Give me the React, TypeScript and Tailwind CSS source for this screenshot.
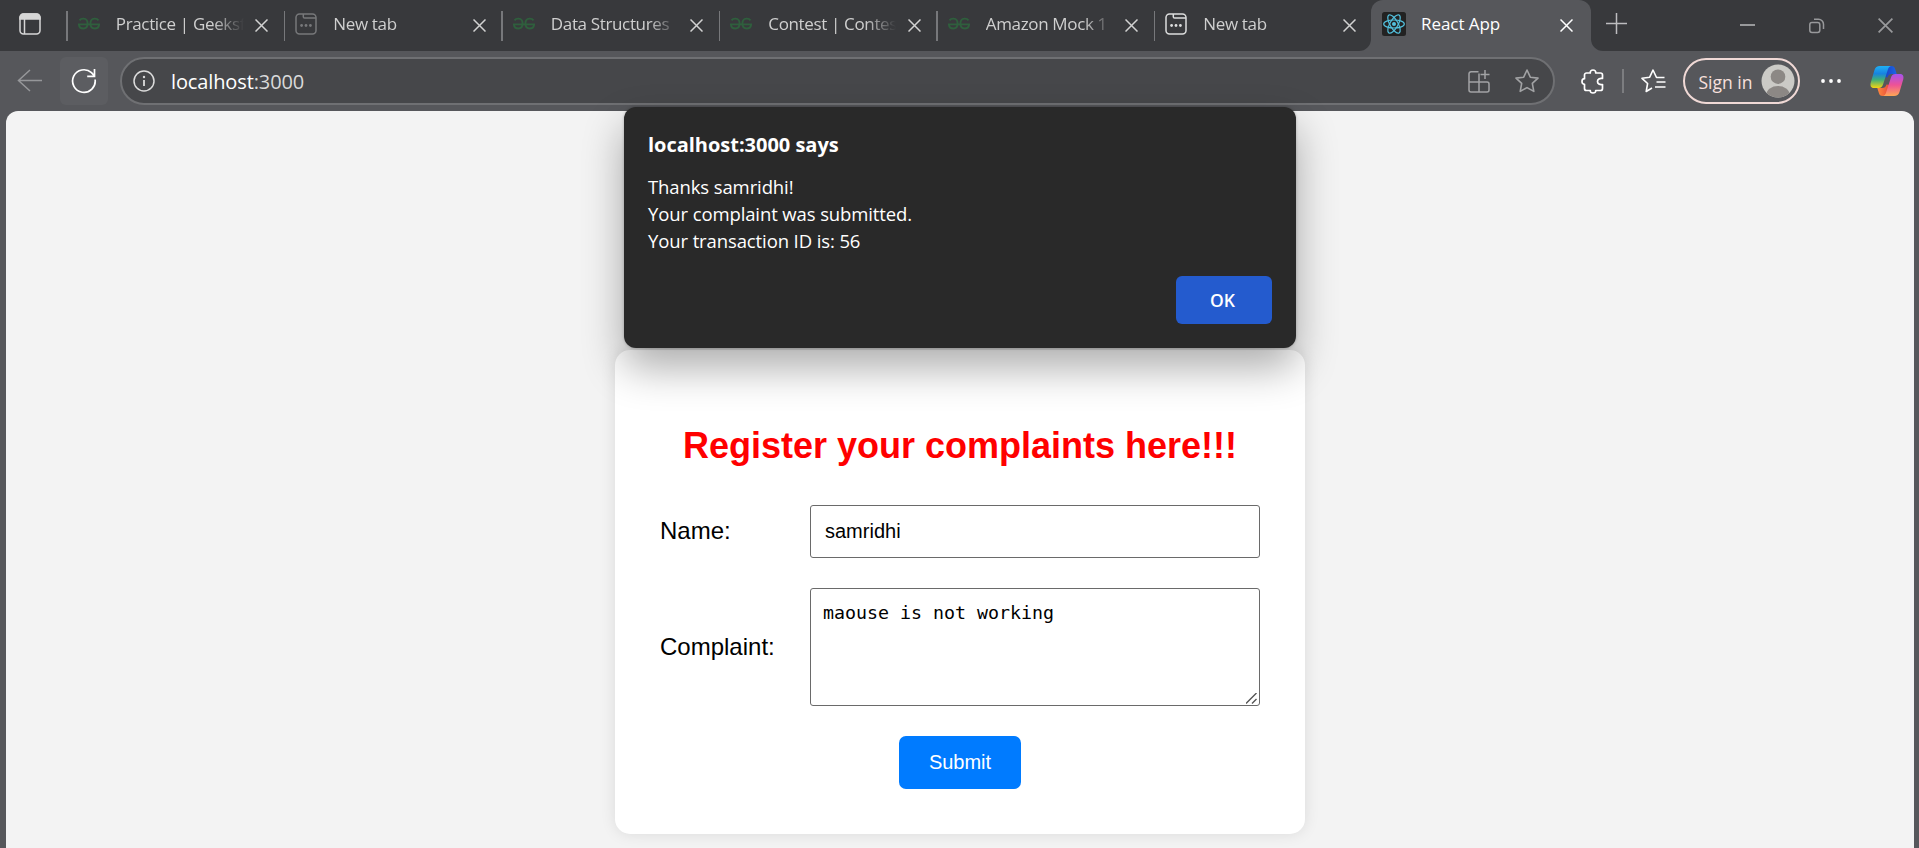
import React from "react";

const ui = "font-['Open_Sans','Noto_Sans',sans-serif]";

function GfgIcon() {
  return (
    <svg width="22" height="14" viewBox="0 0 22 14" fill="none" stroke="#2f5f3d" strokeWidth="1.9">
      <path d="M1.5 3.4C2.6 1.8 4.2 1.5 5.6 1.6c2.4.2 4 2.100 4 4.900 0 3-1.700 5-4.300 5-2.500 0-4.200-1.500-4.400-4.100H21.100c-.2 2.600-1.900 4.100-4.400 4.100-2.600 0-4.300-2-4.300-5 0-2.800 1.600-4.700 4-4.900 1.400-.1 3 .2 4.100 1.800" />
    </svg>
  );
}

function NewTabIcon({ color }: { color: string }) {
  return (
    <svg width="22" height="22" viewBox="0 0 22 22" fill="none" stroke={color} strokeWidth="1.5">
      <rect x="1" y="1" width="20" height="20" rx="3.500" />
      <path d="M8.300 1v2.700c0 .8.500 1.300 1.300 1.300H21" />
      <g fill={color} stroke="none">
        <circle cx="6.600" cy="12.500" r="1.400" />
        <circle cx="11" cy="12.500" r="1.400" />
        <circle cx="15.400" cy="12.500" r="1.400" />
      </g>
    </svg>
  );
}

function ReactIcon() {
  return (
    <svg width="24" height="24" viewBox="0 0 24 24" fill="none" stroke="#53c1de" strokeWidth="1.200">
      <rect width="24" height="24" rx="2.500" fill="#222" stroke="none" />
      <ellipse cx="12" cy="12" rx="10.300" ry="4" />
      <ellipse cx="12" cy="12" rx="10.300" ry="4" transform="rotate(60 12 12)" />
      <ellipse cx="12" cy="12" rx="10.300" ry="4" transform="rotate(120 12 12)" />
      <circle cx="12" cy="12" r="2" fill="#53c1de" stroke="none" />
    </svg>
  );
}

function Cross({ color, size = 13 }: { color: string; size?: number }) {
  return (
    <svg width={size} height={size} viewBox="0 0 13 13" stroke={color} strokeWidth="1.500" fill="none">
      <path d="M.5.5l12 12M12.500.5l-12 12" />
    </svg>
  );
}

type TabInfo = { title: string; icon: "gfg" | "new" | "newBright" };

const tabs: TabInfo[] = [
  { title: "Practice | Geeksf", icon: "gfg" },
  { title: "New tab", icon: "new" },
  { title: "Data Structures", icon: "gfg" },
  { title: "Contest | Contes", icon: "gfg" },
  { title: "Amazon Mock 1", icon: "gfg" },
  { title: "New tab", icon: "newBright" },
];

function Tab({ title, icon }: TabInfo) {
  return (
    <div className="flex h-full w-[217.500px] shrink-0 items-start">
      <div className="mt-[11px] h-[30px] w-[1.500px] shrink-0 bg-[#77787b]" />
      <div className="ml-[10px] flex h-[48px] w-[22px] shrink-0 items-center">
        {icon === "gfg" ? <GfgIcon /> : <NewTabIcon color={icon === "new" ? "#77787a" : "#dcdddd"} />}
      </div>
      <div className="ml-[16px] h-[48px] w-[128px] shrink-0 overflow-hidden whitespace-nowrap text-[17px] leading-[48px] tracking-[-0.350px] text-[#cfcfcf] [mask-image:linear-gradient(to_right,black_76%,transparent)]">
        {title}
      </div>
      <div className="ml-[11.500px] flex h-[50px] items-center">
        <Cross color="#d2d2d2" />
      </div>
    </div>
  );
}

function TabStrip() {
  return (
    <div className="flex h-[51px] bg-[#38393c]">
      <div className="w-[66.300px] shrink-0 pt-[13px] pl-[19px]">
        <svg width="22" height="22" viewBox="0 0 22 22" fill="none" stroke="#d6d6d6" strokeWidth="1.500">
          <rect x="1" y="1" width="20" height="20" rx="3.500" />
          <path d="M5.500 6v15" />
          <path d="M1 6V4.500A3.500 3.500 0 0 1 4.500 1h13A3.500 3.500 0 0 1 21 4.500V6z" fill="#d6d6d6" />
        </svg>
      </div>
      {tabs.map((t, i) => (
        <Tab key={i} {...t} />
      ))}
      <div className="-ml-[12.300px] flex">
        <svg className="mt-[39px] shrink-0" width="12" height="12" fill="#56575b">
          <path d="M12 0A12 12 0 0 1 0 12h12z" />
        </svg>
        <div className="flex h-[51px] w-[220px] rounded-t-[12px] bg-[#56575b]">
          <div className="ml-[11px] pt-[12px]">
            <ReactIcon />
          </div>
          <div className="ml-[15px] w-[138px] text-[17px] leading-[48px] tracking-[-0.050px] text-white">React App</div>
          <div className="flex h-[50px] items-center">
            <span className="ml-px">
              <Cross color="#ffffff" />
            </span>
          </div>
        </div>
        <svg className="mt-[39px] shrink-0" width="12" height="12" fill="#56575b">
          <path d="M0 0a12 12 0 0 0 12 12H0z" />
        </svg>
      </div>
      <svg className="mt-[13px] ml-[3px] shrink-0" width="22" height="22" stroke="#bdbdbf" strokeWidth="1.500">
        <path d="M10.500 0v21M0 10.500h21" />
      </svg>
      <div className="flex flex-1 items-center justify-end pr-[26px]">
        <svg width="15" height="3" className="mr-[54px]">
          <rect width="15" height="2" y="0" fill="#98999b" />
        </svg>
        <svg width="16" height="16" fill="none" stroke="#98999b" strokeWidth="1.500" className="mr-[53px]">
          <rect x="0.800" y="4.500" width="10" height="10" rx="2.200" />
          <path d="M5 1.200h4.500A5 5 0 0 1 14.500 6.200V11" />
        </svg>
        <Cross color="#98999b" size={15} />
      </div>
    </div>
  );
}

function CopilotIcon() {
  return (
    <svg width="34" height="32" viewBox="0 0 34 32">
      <defs>
        <linearGradient id="cpA" x1="0" y1="0" x2="0" y2="1">
          <stop offset="0" stopColor="#1fb0f4" />
          <stop offset=".35" stopColor="#1783e0" />
          <stop offset=".62" stopColor="#3fae7a" />
          <stop offset="1" stopColor="#f5d410" />
        </linearGradient>
        <linearGradient id="cpB" x1="0" y1="0" x2="0" y2="1">
          <stop offset="0" stopColor="#a552ee" />
          <stop offset=".5" stopColor="#ee5296" />
          <stop offset="1" stopColor="#ffa755" />
        </linearGradient>
        <linearGradient id="cpC" x1="0" y1="0" x2="1" y2="0">
          <stop offset="0" stopColor="#1b3fc0" />
          <stop offset="1" stopColor="#1b66e8" />
        </linearGradient>
        <linearGradient id="cpD" x1="0" y1="0" x2="1" y2="0">
          <stop offset="0" stopColor="#fd8a3f" />
          <stop offset="1" stopColor="#e8483a" />
        </linearGradient>
      </defs>
      <path d="M15 1h6.500c2.200 0 3 1.100 3.700 3.300L26.700 9H22c-2.500 0-3.800 1-4.500 3.500L14 12z" fill="url(#cpC)" />
      <path d="M19 31h-6.500c-2.200 0-3-1.100-3.700-3.300L7.300 23H12c2.500 0 3.800-1 4.500-3.500L20 20z" fill="url(#cpD)" />
      <path d="M10 1h11c-1.700.4-2.500 1.500-3.100 3.500l-4.700 14.500c-.8 2.800-2 4-4.500 4H4C.7 23 0 20.500.8 17.500L4.500 5C5.300 2.300 7 1 10 1z" fill="url(#cpA)" />
      <path d="M24 31H13c1.700-.4 2.500-1.500 3.100-3.500L20.800 13c.8-2.800 2-4 4.500-4H30c3.300 0 4 2.500 3.200 5.500L29.500 27c-.8 2.700-2.500 4-5.500 4z" fill="url(#cpB)" />
    </svg>
  );
}

function Toolbar() {
  return (
    <div className="flex h-[60px] items-center bg-[#56575b]">
      <svg className="ml-[17px] shrink-0" width="26" height="24" fill="none" stroke="#96979a" strokeWidth="1.500">
        <path d="M25 11.500H1.500M13 1L1.500 11.500 13 22" />
      </svg>
      <div className="ml-[17px] flex size-[48px] shrink-0 items-center justify-center rounded-[6px] bg-[#5c5d61]">
        <svg width="26" height="26" fill="none" stroke="#fff" strokeWidth="1.700">
          <path d="M24.100 11.500A11.300 11.300 0 1 1 20.500 4.700L23 7.500M23.500 1v7.300h-7.300" />
        </svg>
      </div>
      <div className="ml-[12px] flex h-[48px] w-[1435px] shrink-0 items-center rounded-full border-2 border-[#6f7073] bg-[#46474a]">
        <svg className="ml-[11px]" width="22" height="22" fill="none" stroke="#dcdcdc" strokeWidth="1.500">
          <circle cx="11" cy="11" r="10" />
          <path d="M11 10v6" strokeWidth="1.800" />
          <circle cx="11" cy="7" r="1.200" fill="#dcdcdc" stroke="none" />
        </svg>
        <div className="ml-[16px] flex-1 pt-[2px] text-[20px] leading-[30px] tracking-[-0.120px] text-white">
          localhost<span className="text-[#dadada]">:3000</span>
        </div>
        <svg width="23" height="23" fill="none" stroke="#a2a3a5" strokeWidth="1.500" className="mr-[25px]">
          <path d="M11.500 1.800H4a2 2 0 0 0-2 2V20a2 2 0 0 0 2 2h16a2 2 0 0 0 2-2v-6a2 2 0 0 0-2-2H2M12 22V3.500M18 0v9M13.500 4.500h9" />
        </svg>
        <svg width="24" height="24" viewBox="0 0 24 24" fill="none" stroke="#a2a3a5" strokeWidth="1.600" strokeLinejoin="round" className="mr-[14px]">
          <path d="M12 1l3.300 7.200 7.700.9-5.700 5.300 1.500 8L12 18.600 5.200 22.400l1.500-8L1 9.100l7.700-.9z" />
        </svg>
      </div>
      <svg className="ml-[26px] shrink-0" width="24" height="25" fill="none" stroke="#fff" strokeWidth="1.700" strokeLinejoin="round">
        <path d="M5.500 4H9.300C9 2 10.300 1 12 1s3 1 2.700 3H19.500a2 2 0 0 1 2 2V9.500C18.500 9 16.500 10.300 16.500 12.500s2 3.500 5 3V19.500a2 2 0 0 1-2 2H14.700C15 23.300 13.700 24 12 24s-3-.7-2.700-2.500H5.500a2 2 0 0 1-2-2V15.300C1.700 15.300 1 14 1 12.500s.7-2.800 2.500-2.800V6a2 2 0 0 1 2-2z" />
      </svg>
      <div className="ml-[17px] h-[24px] w-[1.500px] shrink-0 bg-[#7c7d80]" />
      <svg className="ml-[17.500px] shrink-0" width="25" height="24" fill="none" stroke="#fff" strokeWidth="1.600" strokeLinejoin="round">
        <path d="M23.500 8.500H15.500L12 1 8.700 8.200 1 9.300l5.600 5.200-1.400 8L11 19M15.500 13H24.500M14 18H24.500" />
      </svg>
      <div className="ml-[17px] flex h-[46px] w-[117px] shrink-0 items-center rounded-full border-2 border-[#f0d9d6]">
        <div className="ml-[13.500px] w-[62.500px] pt-[2px] text-[17.500px] leading-[28px] tracking-[0px] text-[#f8e0dd]">Sign in</div>
        <svg className="shrink-0" width="34" height="34" viewBox="0 0 34 34">
          <defs>
            <clipPath id="avatar">
              <circle cx="17" cy="17" r="16.500" />
            </clipPath>
          </defs>
          <g clipPath="url(#avatar)">
            <rect width="34" height="34" fill="#cbcac6" />
            <circle cx="17" cy="12.700" r="7.300" fill="#8c8885" />
            <ellipse cx="17" cy="30.500" rx="11.500" ry="8.500" fill="#8c8885" />
          </g>
        </svg>
      </div>
      <svg className="ml-[20.500px] shrink-0" width="20" height="4" fill="#fff">
        <circle cx="2" cy="2" r="1.900" />
        <circle cx="10" cy="2" r="1.900" />
        <circle cx="18" cy="2" r="1.900" />
      </svg>
      <div className="ml-[29px] shrink-0">
        <CopilotIcon />
      </div>
    </div>
  );
}

function AlertDialog() {
  return (
    <div className={`absolute top-[107px] left-[624px] flex h-[241px] w-[672px] flex-col rounded-[12px] bg-[#292929] px-[24px] pt-[23px] text-white shadow-[0_0_3px_rgba(0,0,0,0.250),0_20px_42px_rgba(0,0,0,0.320)] ${ui}`}>
      <div className="text-[20px] leading-[30px] font-bold tracking-[-0.020px]">localhost:3000 says</div>
      <div className="mt-[13px] text-[18.500px] leading-[27px] tracking-[-0.110px]">
        <p>Thanks samridhi!</p>
        <p>Your complaint was submitted.</p>
        <p>Your transaction ID is: 56</p>
      </div>
      <button className="mt-[22px] h-[48px] w-[96px] self-end rounded-[6px] bg-[#245bce] pr-[3px] text-[17.500px] font-semibold">OK</button>
    </div>
  );
}

function ComplaintForm() {
  return (
    <form className="flex h-[484px] w-[690px] flex-col rounded-[15px] bg-white px-[45px] font-['Liberation_Sans',sans-serif] text-black shadow-[0_0_15px_rgba(0,0,0,0.100)]">
      <h2 className="mt-[75px] text-center text-[36px] leading-[41px] font-bold text-[#ff0000]">Register your complaints here!!!</h2>
      <div className="mt-[39px] flex items-center">
        <label className="w-[150px] pb-[2px] text-[24px]">Name:</label>
        <input readOnly value="samridhi" className="h-[53px] w-[450px] rounded-[3px] border border-[#6a6a6a] px-[14px] text-[20px]" />
      </div>
      <div className="mt-[30px] flex items-center">
        <label className="w-[150px] text-[24px]">Complaint:</label>
        <textarea
          readOnly
          value="maouse is not working"
          className="block h-[118px] w-[450px] resize-none rounded-[3px] border border-[#6a6a6a] bg-white px-[12px] pt-[12px] font-['DejaVu_Sans_Mono',monospace] text-[18.300px] leading-[24px]"
        />
        <svg className="relative top-[51px] -ml-[14px]" width="11" height="11" stroke="#555" strokeWidth="1.400">
          <path d="M0 10.500L10.500 0M6 10.500L10.500 6" />
        </svg>
      </div>
      <button type="button" className="mt-[30px] h-[53px] w-[122px] self-center rounded-[7px] bg-[#007bff] pb-[2px] text-[20px] text-white">
        Submit
      </button>
    </form>
  );
}

export default function App() {
  return (
    <div className="relative flex h-[848px] w-[1919px] flex-col overflow-hidden bg-[#56575b]">
      <div className={ui}>
        <TabStrip />
        <Toolbar />
      </div>
      <main className="mr-[5px] ml-[6px] flex flex-1 justify-center rounded-t-[12px] bg-[#f3f3f3] pt-[239px]">
        <ComplaintForm />
      </main>
      <AlertDialog />
    </div>
  );
}
